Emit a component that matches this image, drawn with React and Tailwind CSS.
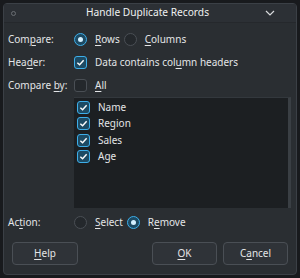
const font = { fontFamily: '"Noto Sans", "Open Sans", sans-serif' };

function U({ children }) {
  return <span className="underline underline-offset-2 decoration-1">{children}</span>;
}

function Radio({ on }) {
  return (
    <span
      className={
        "w-[13px] h-[13px] rounded-full border flex items-center justify-center shrink-0 " +
        (on ? "border-[#3daee9] bg-[#1d4a63]" : "border-[#4a4f55] bg-[#24282c]")
      }
    >
      {on && <span className="w-[5px] h-[5px] rounded-full bg-[#d4f0ff]" />}
    </span>
  );
}

function Check({ on }) {
  return (
    <span
      className={
        "w-[13px] h-[13px] rounded-[3px] border flex items-center justify-center shrink-0 " +
        (on ? "border-[#3daee9] bg-[#1d4a63]" : "border-[#4a4f55] bg-[#24282c]")
      }
    >
      {on && (
        <svg width="9" height="9" viewBox="0 0 10 10">
          <path d="M1.5 5.2 L4 7.5 L8.5 2.5" fill="none" stroke="#fcfcfc" strokeWidth="1.6" />
        </svg>
      )}
    </span>
  );
}

function Row({ label, h, children }) {
  return (
    <div className={"flex items-center " + h}>
      <div className="w-[66px] shrink-0">{label}</div>
      <div className="flex items-center">{children}</div>
    </div>
  );
}

export default function App() {
  const cols = ["Name", "Region", "Sales", "Age"];
  return (
    <div className="w-[300px] h-[278px] bg-[#181a1d] p-[3px] text-[10px] text-[#e3e5e7]" style={font}>
      <div className="w-full h-[272px] rounded-[4px] border border-[#3b4046] bg-[#2a2e32] flex flex-col">
        <div className="h-[19px] flex items-center justify-between px-[7px] bg-[#2c3035] border-b border-[#25282c]">
          <span className="w-[5px] h-[5px] rounded-full border border-[#6a6e73]" />
          <span className="text-[#eff0f1] ml-[16px] text-[10.2px]">Handle Duplicate Records</span>
          <svg width="14" height="10" viewBox="0 0 14 10" className="mr-[12px]">
            <path d="M3 3 L7 7 L11 3" fill="none" stroke="#d8dadc" strokeWidth="1.2" />
          </svg>
        </div>
        <div className="flex flex-col px-[4px] pt-[4px]">
          <Row label={<>Com<U>p</U>are:</>} h="h-[24px]">
            <Radio on />
            <span className="ml-[8px]"><U>R</U>ows</span>
            <span className="ml-[4px]"><Radio /></span>
            <span className="ml-[8px]"><U>C</U>olumns</span>
          </Row>
          <Row label={<>Hea<U>d</U>er:</>} h="h-[23px]">
            <Check on />
            <span className="ml-[8px]">Data contains col<U>u</U>mn headers</span>
          </Row>
          <Row label={<>Compare <U>b</U>y:</>} h="h-[23px]">
            <Check />
            <span className="ml-[8px]"><U>A</U>ll</span>
          </Row>
          <div className="flex">
            <div className="w-[66px] shrink-0" />
            <div className="flex-1 mr-[1px] h-[111px] bg-[#1c1f22] border-t border-[#33383d] border-r-[3px] border-r-[#3a3f44] pt-[1px]">
              {cols.map((c) => (
                <div key={c} className="h-[16.5px] flex items-center pl-[3px]">
                  <Check on />
                  <span className="ml-[8px]">{c}</span>
                </div>
              ))}
            </div>
          </div>
          <Row label={<>Ac<U>t</U>ion:</>} h="h-[28px]">
            <Radio />
            <span className="ml-[8px]"><U>S</U>elect</span>
            <span className="ml-[4px]"><Radio on /></span>
            <span className="ml-[8px]">R<U>e</U>move</span>
          </Row>
        </div>
        <div className="flex items-center px-[8px] mt-[6px]">
          <button className="w-[66px] h-[23px] rounded-[4px] border border-[#4a4f55] bg-[#2f3338]"><U>H</U>elp</button>
          <div className="flex-1" />
          <button className="w-[65px] h-[23px] rounded-[4px] border border-[#4a4f55] bg-[#2f3338]"><U>O</U>K</button>
          <button className="w-[65px] h-[23px] ml-[6px] rounded-[4px] border border-[#4a4f55] bg-[#2f3338]">C<U>a</U>ncel</button>
        </div>
      </div>
    </div>
  );
}
